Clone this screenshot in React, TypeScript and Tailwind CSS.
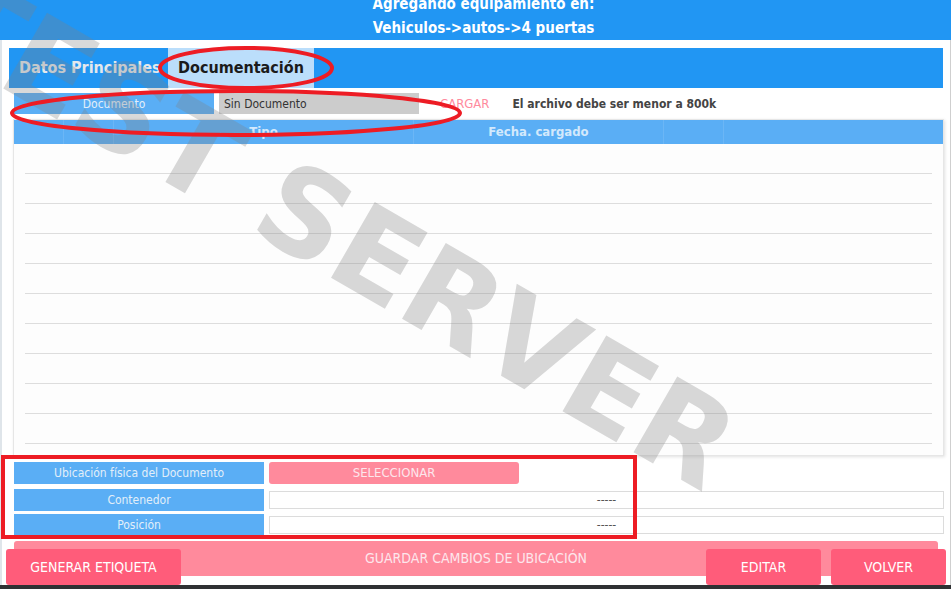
import { type PropsWithChildren } from "react"

const rows = Array.from({ length: 10 })

export default function App() {
  return (
    <main className="relative w-[951px] h-[589px] overflow-hidden bg-white font-['DejaVu_Sans_Condensed','DejaVu_Sans',sans-serif]">
      <header className="h-10 pl-4 bg-[#2196f3] flex flex-col justify-end items-center text-white font-bold text-[15px] leading-[24px] overflow-hidden">
        <div>Agregando equipamiento en:</div>
        <div>Vehiculos-&gt;autos-&gt;4 puertas</div>
      </header>

      <section className="h-[545px] flex flex-col border-l-2 border-l-[#dfe5ea] border-r border-r-[#cfcfcf]">
        <nav className="mt-2 ml-[7px] w-[934px] h-10 bg-[#2196f3] flex items-stretch font-bold text-[16px]">
          <div className="w-[159px] pl-[10px] flex items-center text-[#e3e8ec]">Datos Principales</div>
          <div className="w-[146px] flex items-center justify-center bg-[#bbdefb] text-[#1b1b1b]">
            Documentación
          </div>
        </nav>

        <div className="mt-[5px] ml-[12px] h-[21px] flex items-center text-[12px]">
          <Label className="w-[200px] h-full">Documento</Label>
          <div className="ml-[5px] w-[200px] h-full bg-[#cccccc] text-[#333] flex items-center pl-[5px]">
            Sin Documento
          </div>
          <span className="ml-[21px] text-[13px] text-[#ff8a9e]">CARGAR</span>
          <span className="ml-[23px] font-bold text-[#444]">El archivo debe ser menor a 800k</span>
        </div>

        <div className="mt-[5px] ml-[11px] w-[931px] h-[337px] border border-[#e6e6e6] shadow-[1px_1px_3px_rgba(0,0,0,0.12)] bg-[#fdfdfd] flex flex-col">
          <div className="h-6 bg-[#5aaef5] flex font-bold text-[13px] text-[#d3e9fc]">
            <div className="w-[50px] border-r border-white/10" />
            <div className="w-[50px] border-r border-white/10" />
            <div className="w-[300px] border-r border-white/10 flex items-center justify-center">Tipo</div>
            <div className="w-[250px] border-r border-white/10 flex items-center justify-center">Fecha. cargado</div>
            <div className="w-[60px] border-r border-white/10" />
            <div className="flex-1" />
          </div>
          <div className="mx-[11px] flex flex-col">
            {rows.map((_, i) => (
              <div key={i} className="h-[30px] border-b border-[#dddddd]" />
            ))}
          </div>
        </div>

        <div className="mt-[6px] ml-[12px] flex flex-col text-[12px]">
          <div className="h-[22px] flex">
            <Label className="w-[250px]">Ubicación física del Documento</Label>
            <button className="ml-[5px] w-[250px] rounded-[3px] bg-[#ff8a9c] text-[#fde6ec] text-[13px]">
              SELECCIONAR
            </button>
          </div>
          <div className="mt-[5px] h-[22px] flex">
            <Label className="w-[250px]">Contenedor</Label>
            <Field />
          </div>
          <div className="mt-[3px] h-[22px] flex">
            <Label className="w-[250px]">Posición</Label>
            <Field />
          </div>
        </div>

        <div className="mt-[5px] grid">
          <div className="col-start-1 row-start-1 ml-[12px] w-[924px] h-[35px] rounded-[3px] bg-[#ff8a9c] text-[#fde6ec] text-[14px] flex items-center justify-center">
            GUARDAR CAMBIOS DE UBICACIÓN
          </div>
          <div className="col-start-1 row-start-1 mt-2 flex items-start text-[14px] text-white">
            <PinkButton className="ml-[4px] w-[175px]">GENERAR ETIQUETA</PinkButton>
            <PinkButton className="ml-auto w-[115px]">EDITAR</PinkButton>
            <PinkButton className="ml-[10px] mr-[4px] w-[115px]">VOLVER</PinkButton>
          </div>
        </div>
      </section>
      <div className="h-1 bg-[#2f3133]" />

      <div className="pointer-events-none absolute left-[334px] top-[232px] -translate-x-1/2 -translate-y-1/2 rotate-30 whitespace-nowrap font-['DejaVu_Sans',sans-serif] font-bold text-[120px] leading-none text-[rgba(128,128,128,0.3)]">
        TEST SERVER
      </div>

      <svg className="pointer-events-none absolute inset-0" width="951" height="589" fill="none" stroke="#ed1c24" strokeWidth="4">
        <ellipse cx="246" cy="68" rx="86" ry="20" />
        <ellipse cx="236" cy="113" rx="224" ry="22" />
        <rect x="3" y="457" width="632" height="80" />
      </svg>
    </main>
  )
}

function Label({ children, className }: PropsWithChildren<{ className?: string }>) {
  return (
    <div className={`${className} bg-[#5aaef5] text-[#e2eef9] flex items-center justify-center`}>
      {children}
    </div>
  )
}

function Field() {
  return (
    <div className="ml-[5px] my-[2px] flex-1 mr-[6px] border border-[#dcdcdc] bg-white flex items-center justify-center text-[#555]">
      -----
    </div>
  )
}

function PinkButton({ children, className }: PropsWithChildren<{ className?: string }>) {
  return (
    <button className={`${className} h-9 rounded-[3px] bg-[#ff5c7a] flex items-center justify-center`}>
      {children}
    </button>
  )
}
